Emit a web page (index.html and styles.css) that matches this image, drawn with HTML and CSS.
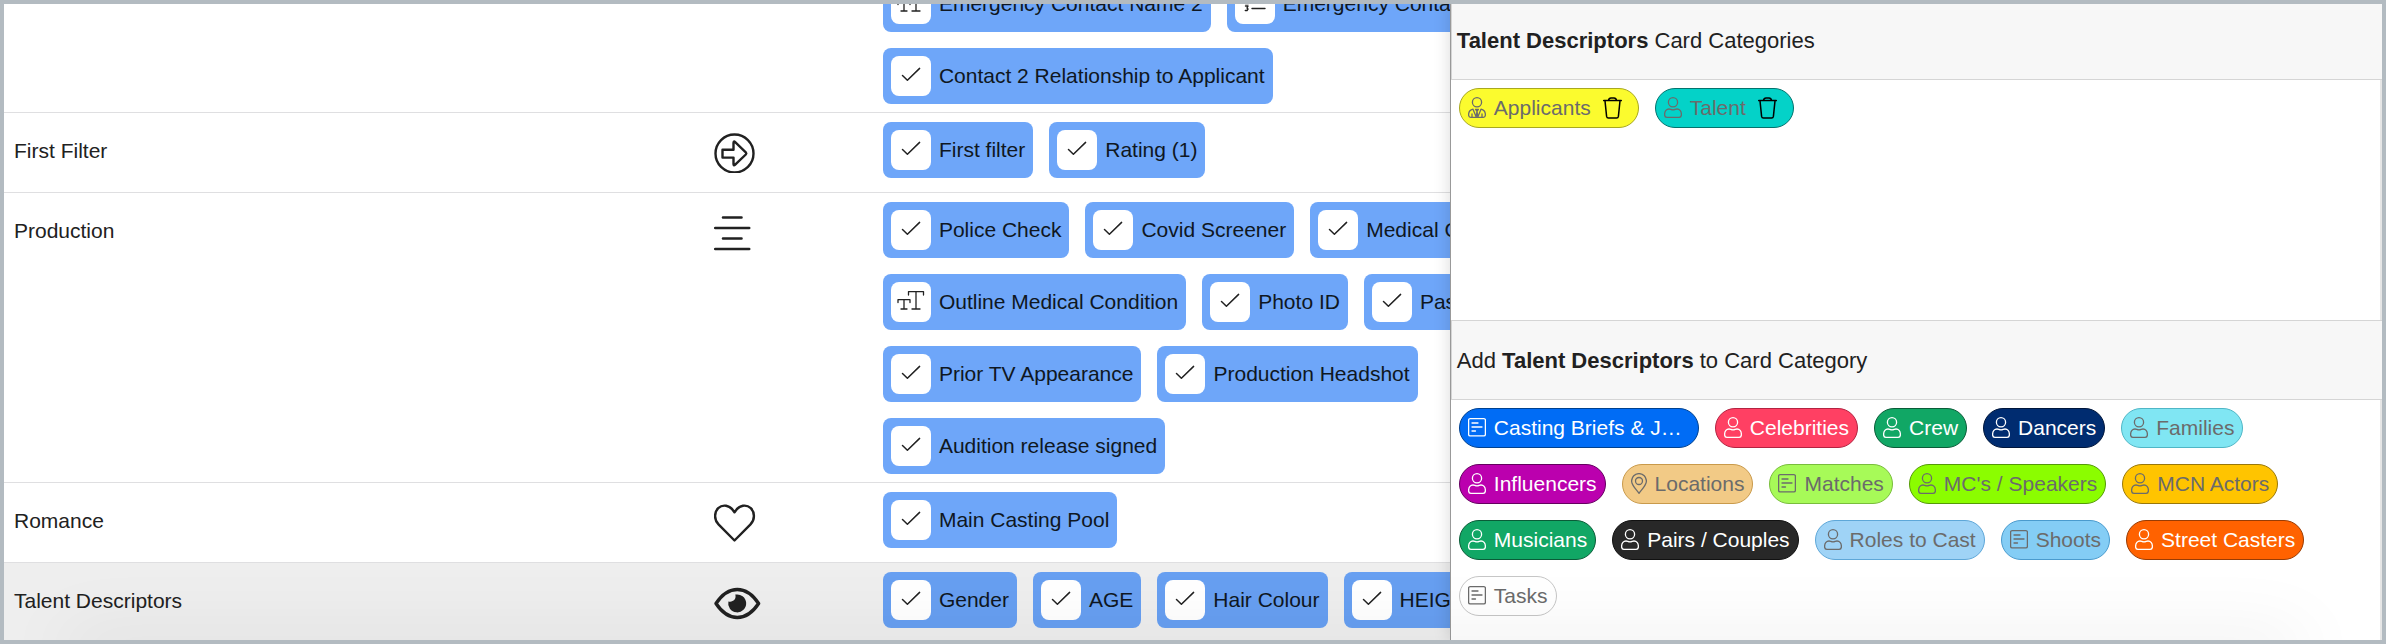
FILE: index.html
```html
<!DOCTYPE html>
<html lang="en">
<head>
    <meta charset="UTF-8">
    <meta name="viewport" content="width=device-width, initial-scale=1.0">
    <title>Card Categories</title>
    <link rel="stylesheet" href="styles.css">
</head>
<body>
    <!-- Shared icons -->
    <svg class="icon-defs" aria-hidden="true">
        <symbol id="check" viewBox="0 0 40 40">
            <path d="M11.5 19.5L16.4 24.2L28.6 12.4" stroke-width="1.5"/>
        </symbol>
        <symbol id="text-size" viewBox="0 0 40 40">
            <path d="M17.5 13V9.6H32.5V13M25 9.6V27M21 27H29M7 20.5V17.7H19V20.5M13 17.7V27M10 27H16" stroke-width="1.3"/>
        </symbol>
        <symbol id="num-list" viewBox="0 0 40 40">
            <path d="M17 12H30M17 18H30M17 24.5H30M11 9.5L12.5 9V13M10.5 15.5H13V17.5L10.5 19.5H13.2M10.5 22H13L12 24L13 25L12 26.5H10.3" stroke-width="1.4"/>
        </symbol>
        <symbol id="person" viewBox="0 0 18 21">
            <circle cx="9" cy="5.3" r="4.6"/>
            <path d="M.6 17.6C.6 14.2 2.6 12 5 12C6.4 12 7.2 12.9 9 12.9S11.6 12 13 12C15.4 12 17.4 14.2 17.4 17.6C17.4 19.6 16.8 20.3 15.2 20.3H2.8C1.2 20.3 .6 19.6 .6 17.6Z"/>
        </symbol>
        <symbol id="person-tie" viewBox="0 0 18 21">
            <circle cx="9" cy="5.3" r="4.6"/>
            <path d="M5 12.2C2.4 12.8.6 15.2.6 17.8C.6 19.6 1.2 20.3 2.6 20.3H15.4C16.8 20.3 17.4 19.6 17.4 17.8C17.4 15.2 15.6 12.8 13 12.2L9.8 20L9 14L8.2 20L5 12.2M7.6 12.4H10.4L9 14.5ZM4 20V17M14 20V17"/>
        </symbol>
        <symbol id="note" viewBox="0 0 18 21">
            <rect x=".6" y="1.6" width="16.8" height="17.2" rx="1.5"/>
            <path d="M4 6H10M4 10H14M4 14H7.5"/>
        </symbol>
        <symbol id="pin" viewBox="0 0 16 21">
            <path d="M8 20.3C5.5 16.5.6 12.5.6 8A7.4 7.4 0 0 1 15.4 8C15.4 12.5 10.5 16.5 8 20.3Z"/>
            <circle cx="8" cy="8" r="3.5"/>
        </symbol>
        <symbol id="trash" viewBox="0 0 19 22">
            <path d="M.7 3.6H18.3M5.4 3.4C5.8 1.6 6.6 1 8 1H11C12.4 1 13.2 1.6 13.6 3.4M2 3.8L3.6 19.4C3.8 20.6 4.3 21 5.4 21H13.6C14.7 21 15.2 20.6 15.4 19.4L17 3.8" stroke-width="1.5"/>
        </symbol>
    </svg>

    <main class="screen">
        <div class="list">
            <table>
                <colgroup>
                    <col class="col-name">
                    <col class="col-icon">
                    <col>
                </colgroup>
                <tr>
                    <td></td>
                    <td></td>
                    <td>
                        <ul class="fields">
                            <li><svg><use href="#text-size"/></svg>Emergency Contact Name 2</li>
                            <li><svg><use href="#num-list"/></svg>Emergency Contact Phone 2</li>
                            <li><svg><use href="#check"/></svg>Contact 2 Relationship to Applicant</li>
                        </ul>
                    </td>
                </tr>
                <tr>
                    <td class="name">First Filter</td>
                    <td class="group-icon">
                        <svg viewBox="0 0 48 40">
                            <circle cx="20.5" cy="20.5" r="19" stroke-width="2.4"/>
                            <path d="M8.5 16.8H19.5V10Q19.5 7.6 21.2 9.2L31.8 19.3Q32.8 20.4 31.8 21.5L21.2 31.6Q19.5 33.2 19.5 31V24.6H8.5Z" stroke-width="2.4"/>
                        </svg>
                    </td>
                    <td>
                        <ul class="fields">
                            <li><svg><use href="#check"/></svg>First filter</li>
                            <li><svg><use href="#check"/></svg>Rating (1)</li>
                        </ul>
                    </td>
                </tr>
                <tr>
                    <td class="name">Production</td>
                    <td class="group-icon">
                        <svg viewBox="0 0 48 40">
                            <path d="M9 4.5H27.5M1.2 15H35.2M9 25.5H27.5M1.2 36H35.2" stroke-width="2.6"/>
                        </svg>
                    </td>
                    <td>
                        <ul class="fields">
                            <li><svg><use href="#check"/></svg>Police Check</li>
                            <li><svg><use href="#check"/></svg>Covid Screener</li>
                            <li><svg><use href="#check"/></svg>Medical Condition</li>
                            <li><svg><use href="#text-size"/></svg>Outline Medical Condition</li>
                            <li><svg><use href="#check"/></svg>Photo ID</li>
                            <li><svg><use href="#check"/></svg>Passport</li>
                            <li><svg><use href="#check"/></svg>Prior TV Appearance</li>
                            <li><svg><use href="#check"/></svg>Production Headshot</li>
                            <li><svg><use href="#check"/></svg>Audition release signed</li>
                        </ul>
                    </td>
                </tr>
                <tr>
                    <td class="name">Romance</td>
                    <td class="group-icon">
                        <svg viewBox="0 0 48 40">
                            <path d="M20.5 37.5L4.5 21.4C-.3 16.5.3 9 4.2 5.2C8.5 1.2 15.5 1.3 20.5 9.3C25.5 1.3 32.5 1.2 36.8 5.2C40.7 9 41.3 16.5 36.5 21.4Z" stroke-width="2.4"/>
                        </svg>
                    </td>
                    <td>
                        <ul class="fields">
                            <li><svg><use href="#check"/></svg>Main Casting Pool</li>
                        </ul>
                    </td>
                </tr>
                <tr class="selected">
                    <td class="name">Talent Descriptors</td>
                    <td class="group-icon">
                        <svg viewBox="0 0 48 40">
                            <path d="M2 20.5C8 11.5 15.5 6.5 23.3 6.5S38.6 11.5 44.6 20.5C38.6 29.5 31 34.5 23.3 34.5S8 29.5 2 20.5Z" stroke-width="3.4"/>
                            <path class="solid" d="M21.3 11.6A9 9 0 1 1 14.4 18.4C18 19.6 22.8 17 21.3 11.6Z"/>
                        </svg>
                    </td>
                    <td>
                        <ul class="fields">
                            <li><svg><use href="#check"/></svg>Gender</li>
                            <li><svg><use href="#check"/></svg>AGE</li>
                            <li><svg><use href="#check"/></svg>Hair Colour</li>
                            <li><svg><use href="#check"/></svg>HEIGHT</li>
                        </ul>
                    </td>
                </tr>
            </table>
        </div>

        <aside class="panel">
            <h2><b>Talent Descriptors</b> Card Categories</h2>
            <div class="pills current">
                <span class="pill applicants"><svg><use href="#person-tie"/></svg>Applicants<button type="button" class="remove" aria-label="Remove Applicants"><svg><use href="#trash"/></svg></button></span>
                <span class="pill talent"><svg><use href="#person"/></svg>Talent<button type="button" class="remove" aria-label="Remove Talent"><svg><use href="#trash"/></svg></button></span>
            </div>

            <h2>Add <b>Talent Descriptors</b> to Card Category</h2>
            <div class="pills">
                <button type="button" class="pill light briefs"><svg><use href="#note"/></svg><span>Casting Briefs &amp; J…</span></button>
                <button type="button" class="pill light celebrities"><svg><use href="#person"/></svg>Celebrities</button>
                <button type="button" class="pill light green"><svg><use href="#person"/></svg>Crew</button>
                <button type="button" class="pill light dancers"><svg><use href="#person"/></svg>Dancers</button>
                <button type="button" class="pill families"><svg><use href="#person"/></svg>Families</button>
                <button type="button" class="pill light influencers"><svg><use href="#person"/></svg>Influencers</button>
                <button type="button" class="pill locations"><svg class="pin"><use href="#pin"/></svg>Locations</button>
                <button type="button" class="pill matches"><svg><use href="#note"/></svg>Matches</button>
                <button type="button" class="pill speakers"><svg><use href="#person"/></svg>MC's / Speakers</button>
                <button type="button" class="pill actors"><svg><use href="#person"/></svg>MCN Actors</button>
                <button type="button" class="pill light green"><svg><use href="#person"/></svg>Musicians</button>
                <button type="button" class="pill light pairs"><svg><use href="#person"/></svg>Pairs / Couples</button>
                <button type="button" class="pill roles"><svg><use href="#person"/></svg>Roles to Cast</button>
                <button type="button" class="pill shoots"><svg><use href="#note"/></svg>Shoots</button>
                <button type="button" class="pill light street"><svg><use href="#person"/></svg>Street Casters</button>
                <button type="button" class="pill tasks"><svg><use href="#note"/></svg>Tasks</button>
            </div>
        </aside>
    </main>
</body>
</html>
```
FILE: styles.css
```css
* {
    margin: 0;
    padding: 0;
    box-sizing: border-box;
}

body {
    font-family: "Liberation Sans", Arial, sans-serif;
    font-size: 21px;
    line-height: 24px;
    color: #212121;
    background-color: #fff;
}

svg {
    display: block;
    flex: none;
    fill: none;
    stroke: currentColor;
    stroke-linecap: round;
    stroke-linejoin: round;
}

.icon-defs {
    position: absolute;
    width: 0;
    height: 0;
}

.screen {
    position: relative;
    display: flex;
    height: 100vh;
    border: 4px solid #b3bbc1;
    overflow: hidden;
}

/* Soft shade along the bottom edge */
.screen::after {
    content: "";
    position: absolute;
    left: 60px;
    right: 80px;
    bottom: -20px;
    height: 20px;
    box-shadow: 0 0 70px rgba(0, 0, 0, 0.13);
    pointer-events: none;
    z-index: 2;
}

/* Left list, scrolled part way down and running under the panel */
.list {
    flex: 1;
    min-width: 0;
    overflow: hidden;
}

table {
    width: 113%;
    margin-top: -38px;
    table-layout: fixed;
    border-collapse: separate;
    border-spacing: 0;
}

.col-name {
    width: 43%;
}

.col-icon {
    width: 10%;
}

td {
    height: 80px;
    padding: 9px 8px 8px 13px;
    vertical-align: top;
    border-top: 1px solid #dfdfe1;
}

td.name {
    padding-top: 26px;
    padding-left: 10px;
}

td.group-icon {
    padding: 20px 0 0 7px;
}

.group-icon svg {
    width: 48px;
    height: 40px;
}

.solid {
    fill: currentColor;
    stroke: none;
}

.fields {
    display: flex;
    flex-wrap: wrap;
    gap: 16px;
    list-style: none;
}

.fields li {
    display: flex;
    align-items: center;
    gap: 8px;
    height: 56px;
    padding: 0 8px;
    border-radius: 8px;
    background-color: #6ea6f9;
    color: #0f1722;
    line-height: 22px;
    white-space: nowrap;
}

.fields svg {
    width: 40px;
    height: 40px;
    border-radius: 8px;
    background-color: #fff;
    color: #212121;
}

.selected td {
    background-color: #eee;
}

.selected li {
    background-color: #679ff1;
}

/* Right panel */
.panel {
    width: 39.2%;
    margin-top: -4px;
    border-left: 1px solid #999;
    border-right: 2px solid #e6e6e6;
    background-color: #fff;
    box-shadow: 0 0 16px rgba(0, 0, 0, 0.15);
    z-index: 1;
}

h2 {
    height: 80px;
    margin-right: -2px;
    padding: 28px 5px 0;
    border: 1px solid #d5d5d5;
    border-right: none;
    background-color: #f7f7f7;
    font-size: 22px;
    font-weight: normal;
}

.pills {
    display: flex;
    flex-wrap: wrap;
    gap: 16px;
    padding: 8px;
}

.current {
    min-height: 240px;
    align-content: flex-start;
}

.pill {
    display: flex;
    align-items: center;
    gap: 8px;
    height: 40px;
    padding: 0 8px;
    border: 1px solid #c6c6c6;
    border-radius: 20px;
    background-color: #fff;
    color: #6b6b6b;
    font: inherit;
    white-space: nowrap;
}

.pill svg {
    width: 18px;
    height: 21px;
    margin-bottom: 2px;
    stroke-width: 1.3;
}

.pill .pin {
    width: 16px;
}

.pill .remove {
    margin-left: 4px;
    margin-right: 8px;
    border: none;
    background: none;
    color: #000;
}

.remove svg {
    width: 19px;
    height: 22px;
    margin-bottom: 0;
}

.light {
    color: #fff;
}

.applicants {
    background-color: #fbfb2e;
    border-color: #a8a81f;
}

.talent {
    background-color: #04d2c8;
    border-color: #03736e;
}

.briefs {
    width: 240px;
    background-color: #006cf5;
    border-color: #00418f;
}

.celebrities {
    background-color: #ff4063;
    border-color: #b32341;
}

.green {
    background-color: #11a765;
    border-color: #0a5c38;
}

.dancers {
    background-color: #002c70;
    border-color: #00163b;
}

.families {
    background-color: #80e6f3;
    border-color: #4fb6c6;
}

.influencers {
    background-color: #bb00ae;
    border-color: #650060;
}

.locations {
    background-color: #f2ca86;
    border-color: #c99a4b;
}

.matches {
    background-color: #a7fa58;
    border-color: #79bd3c;
}

.speakers {
    background-color: #8bfd00;
    border-color: #559a08;
}

.actors {
    background-color: #ffc400;
    border-color: #99780a;
}

.pairs {
    background-color: #282828;
    border-color: #111;
}

.roles {
    background-color: #9fd3f6;
    border-color: #5ea7d8;
}

.shoots {
    background-color: #84cdf5;
    border-color: #4a9bce;
}

.street {
    background-color: #ff6200;
    border-color: #983c04;
}
```
